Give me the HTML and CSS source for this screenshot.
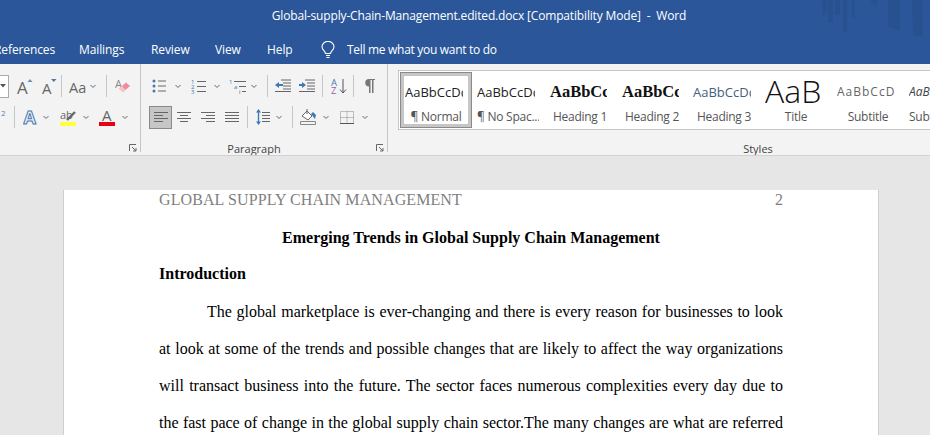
FILE: index.html
```html
<!DOCTYPE html>
<html lang="en">
<head>
<meta charset="utf-8">
<title>Global-supply-Chain-Management.edited.docx</title>
<link rel="stylesheet" href="styles.css">
</head>
<body>
<header class="titlebar">
  <div class="title">Global-supply-Chain-Management.edited.docx [Compatibility Mode]  -  Word</div>
  <svg class="decor" width="110" height="40" viewBox="0 0 110 40">
    <g fill="#28518f">
      <rect x="2" y="0" width="5" height="15"/><rect x="8" y="0" width="5" height="23"/><rect x="15" y="0" width="5" height="15"/><rect x="23" y="0" width="4" height="32"/><rect x="32" y="0" width="3" height="18"/>
      <path d="M50 0h7v8z"/>
      <path d="M68 0h12v31l-4-2-8-2z"/>
      <path d="M92 0h11v36h-10z"/>
    </g>
  </svg>
  <nav class="tabs">
    <span class="tab tab-refs">References</span>
    <span class="tab tab-mail">Mailings</span>
    <span class="tab tab-rev">Review</span>
    <span class="tab tab-view">View</span>
    <span class="tab tab-help">Help</span>
    <svg class="bulb" width="14" height="18" viewBox="0 0 14 18" fill="none" stroke="#fff" stroke-width="1.1">
      <path d="M4.5 12.5C4.3 10 1 9 1 5.8a6 5.4 0 0 1 12 0C13 9 9.700 10 9.500 12.500z"/>
      <path d="M5 14.500h4M5.500 16.500h3"/>
    </svg>
    <span class="tab tab-tell">Tell me what you want to do</span>
  </nav>
</header>

<section class="ribbon">
  <div class="group group-font">
    <div class="tools row-a font-a">
      <span class="combo"><svg width="6" height="4" viewBox="0 0 6 4"><path d="M0 0h6L3 3.500z" fill="#555"/></svg></span>
      <svg class="ico" width="16" height="17" viewBox="0 0 16 17"><text x="0" y="16" class="glyph big">A</text><path d="M10.500 4l2.500-3 2.500 3z" fill="#6b8db5"/></svg>
      <svg class="ico" width="15" height="17" viewBox="0 0 15 17"><text x="0" y="16" class="glyph mid">A</text><path d="M9 1h5.500l-2.700 3z" fill="#4a78ae"/></svg>
      <i class="sep"></i>
      <svg class="ico" width="18" height="15" viewBox="0 0 18 15"><text x="0" y="13.500" class="glyph aa">Aa</text></svg>
      <svg class="chev" width="8" height="5" viewBox="0 0 8 5"><path d="M1.500 1L4 3.500 6.500 1"/></svg>
      <i class="sep"></i>
      <svg class="ico" width="16" height="16" viewBox="0 0 16 16"><text x="0" y="10" class="glyph tiny">A</text><path d="M4 10.500l7-6 4 3.500-7 6z" fill="#ee8c9c"/><path d="M4 10.500l3-2.500 3.500 4-2.500 2z" fill="#f7c4cc"/></svg>
    </div>
    <div class="tools row-b font-b">
      <span class="sup">2</span>
      <i class="sep"></i>
      <svg class="ico" width="15" height="16" viewBox="0 0 15 16"><text x="0.500" y="14.500" class="glyph effect">A</text></svg>
      <svg class="chev" width="8" height="5" viewBox="0 0 8 5"><path d="M1.500 1L4 3.500 6.500 1"/></svg>
      <svg class="ico" width="17" height="17" viewBox="0 0 17 17"><text x="0" y="10" class="glyph small">ab</text><path d="M7 11l8-8" stroke="#666" stroke-width="2.400"/><rect x="0" y="13" width="16" height="4" fill="#ffff3c"/></svg>
      <svg class="chev" width="8" height="5" viewBox="0 0 8 5"><path d="M1.500 1L4 3.500 6.500 1"/></svg>
      <svg class="ico" width="16" height="17" viewBox="0 0 16 17"><text x="3" y="12" class="glyph mid">A</text><rect x="0" y="13" width="16" height="4" fill="#e8000f"/></svg>
      <svg class="chev" width="8" height="5" viewBox="0 0 8 5"><path d="M1.500 1L4 3.500 6.500 1"/></svg>
    </div>
    <footer class="group-foot">
      <span></span><span></span>
      <svg class="launch" width="8" height="8" viewBox="0 0 8 8"><path d="M.5 7V.5H7M3 3l4 4M7 4v3H4" fill="none" stroke="#666"/></svg>
    </footer>
  </div>

  <div class="group group-para">
    <div class="tools row-a para-a">
      <svg class="ico" width="14" height="14" viewBox="0 0 14 14"><g fill="#4a78ae"><circle cx="2" cy="2" r="1.500"/><circle cx="2" cy="7" r="1.500"/><circle cx="2" cy="12" r="1.500"/></g><path d="M6 2h8M6 7h8M6 12h8" stroke="#666"/></svg>
      <svg class="chev" width="8" height="5" viewBox="0 0 8 5"><path d="M1.500 1L4 3.500 6.500 1"/></svg>
      <svg class="ico" width="15" height="15" viewBox="0 0 15 15"><text x="0" y="5" class="glyph num">1</text><text x="0" y="10" class="glyph num">2</text><text x="0" y="15" class="glyph num">3</text><path d="M6 2.500h9M6 7.500h9M6 12.500h9" stroke="#666"/></svg>
      <svg class="chev" width="8" height="5" viewBox="0 0 8 5"><path d="M1.500 1L4 3.500 6.500 1"/></svg>
      <svg class="ico" width="17" height="15" viewBox="0 0 17 15"><text x="0" y="5" class="glyph num">1</text><text x="5" y="10" class="glyph num">a</text><text x="10" y="15" class="glyph num-d">i</text><path d="M5 2.500h12M10 7.500h7M13 12.500h4" stroke="#666"/></svg>
      <svg class="chev" width="8" height="5" viewBox="0 0 8 5"><path d="M1.500 1L4 3.500 6.500 1"/></svg>
      <i class="sep"></i>
      <svg class="ico" width="16" height="14" viewBox="0 0 16 14"><path d="M6 1.500h10M8 4.500h8M8 7.500h8M8 10.500h8M0 13h16" stroke="#666" transform="translate(0 -.5)"/><path d="M0 6l4-3v2h4v2H4v2z" fill="#3f79b5"/></svg>
      <svg class="ico" width="16" height="14" viewBox="0 0 16 14"><path d="M6 1.500h10M8 4.500h8M8 7.500h8M8 10.500h8M0 13h16" stroke="#666" transform="translate(0 -.5)"/><path d="M7 6L3 3v2H0v2h3v2z" fill="#3f79b5"/></svg>
      <i class="sep"></i>
      <svg class="ico" width="16" height="16" viewBox="0 0 16 16"><text x="0" y="7.500" class="glyph az-a">A</text><text x="0" y="16" class="glyph az-z">Z</text><path d="M12 1v14M9 11.500l3 3.500 3-3.500" fill="none" stroke="#555"/></svg>
      <i class="sep"></i>
      <svg class="ico" width="11" height="14" viewBox="0 0 11 14"><path d="M5 7.500a3.700 3.700 0 0 1 0-7.500h6v1H9.500v13H8V1H6.500v13H5z" fill="#777"/></svg>
    </div>
    <div class="tools row-b para-b">
      <span class="toggle"><svg width="14" height="11" viewBox="0 0 14 11"><path d="M0 .5h14M0 3.500h9M0 6.500h14M0 9.500h9" stroke="#666"/></svg></span>
      <svg class="ico" width="14" height="11" viewBox="0 0 14 11"><path d="M0 .5h14M3 3.500h8M0 6.500h14M3 9.500h8" stroke="#666"/></svg>
      <svg class="ico" width="14" height="11" viewBox="0 0 14 11"><path d="M0 .5h14M5 3.500h9M0 6.500h14M5 9.500h9" stroke="#666"/></svg>
      <svg class="ico" width="14" height="11" viewBox="0 0 14 11"><path d="M0 .5h14M0 3.500h14M0 6.500h14M0 9.500h14" stroke="#666"/></svg>
      <i class="sep"></i>
      <svg class="ico" width="14" height="16" viewBox="0 0 14 16"><path d="M6 3.500h8M6 6.500h8M6 9.500h8M6 12.500h8" stroke="#666"/><path d="M2.500 0L5 3.500H3.200v9H5L2.500 16 0 12.500h1.800v-9H0z" fill="#3f79b5"/></svg>
      <svg class="chev" width="8" height="5" viewBox="0 0 8 5"><path d="M1.500 1L4 3.500 6.500 1"/></svg>
      <i class="sep"></i>
      <svg class="ico" width="16" height="16" viewBox="0 0 16 16"><path d="M.5 12.500h15v3H.5z" fill="#f3f3f3" stroke="#888"/><path d="M2 7l5-5 5 5-4 4z" fill="#fff" stroke="#666"/><path d="M7 0v5" stroke="#666"/><path d="M11 5l2-2 3 3-1 4z" fill="#3f79b5"/></svg>
      <svg class="chev" width="8" height="5" viewBox="0 0 8 5"><path d="M1.500 1L4 3.500 6.500 1"/></svg>
      <svg class="ico" width="14" height="13" viewBox="0 0 14 13"><path d="M.5.500h13v12H.5zM7 .5v12M.5 6.500h13" fill="none" stroke="#888" stroke-dasharray="1 1"/><path d="M0 12.500h14" stroke="#555"/></svg>
      <svg class="chev" width="8" height="5" viewBox="0 0 8 5"><path d="M1.500 1L4 3.500 6.500 1"/></svg>
    </div>
    <footer class="group-foot">
      <span></span><span class="group-name name-para">Paragraph</span>
      <svg class="launch" width="8" height="8" viewBox="0 0 8 8"><path d="M.5 7V.5H7M3 3l4 4M7 4v3H4" fill="none" stroke="#666"/></svg>
    </footer>
  </div>

  <div class="group group-styles">
    <div class="gallery">
      <div class="style selected"><div class="pv pv-plain">AaBbCcDd</div><div class="lbl">¶ Normal</div></div>
      <div class="style"><div class="pv pv-plain">AaBbCcDd</div><div class="lbl">¶ No Spac...</div></div>
      <div class="style"><div class="pv pv-head">AaBbCcDd</div><div class="lbl">Heading 1</div></div>
      <div class="style"><div class="pv pv-head">AaBbCcDd</div><div class="lbl">Heading 2</div></div>
      <div class="style"><div class="pv pv-h3">AaBbCcDd</div><div class="lbl">Heading 3</div></div>
      <div class="style"><div class="pv pv-title">AaBbCcDd</div><div class="lbl">Title</div></div>
      <div class="style"><div class="pv pv-sub">AaBbCcDd</div><div class="lbl">Subtitle</div></div>
      <div class="style"><div class="pv pv-em">AaBbCcDd</div><div class="lbl">Subtle Em...</div></div>
    </div>
    <footer class="styles-foot"><span class="group-name">Styles</span></footer>
  </div>
</section>

<main class="doc">
  <article class="page">
    <div class="page-head"><span class="head-text">GLOBAL SUPPLY CHAIN MANAGEMENT</span><span>2</span></div>
    <h1 class="doc-title">Emerging Trends in Global Supply Chain Management</h1>
    <h2 class="doc-h2">Introduction</h2>
    <p class="line first">The global marketplace is ever-changing and there is every reason for businesses to look</p>
    <p class="line">at look at some of the trends and possible changes that are likely to affect the way organizations</p>
    <p class="line">will transact business into the future. The sector faces numerous complexities every day due to</p>
    <p class="line">the fast pace of change in the global supply chain sector.The many changes are what are referred</p>
  </article>
</main>
</body>
</html>
```
FILE: styles.css
```css
* { box-sizing: border-box; }
html, body { margin: 0; padding: 0; height: 435px; overflow: hidden; }
body { width: 930px; background: #e6e6e6; font-family: "Open Sans", "Noto Sans", sans-serif; }

.titlebar { position: relative; height: 64px; background: #2b579a; color: #fff; overflow: hidden; }
.title { height: 36px; padding: 7px 0 0 28px; text-align: center; font-size: 12px; line-height: 17px; white-space: pre; letter-spacing: -0.16px; }
.decor { position: absolute; right: 0; top: 0; }
.tabs { display: flex; align-items: center; height: 28px; margin-left: -6px; font-size: 12px; line-height: 16px; white-space: nowrap; letter-spacing: -0.1px; }
.tab-refs { width: 85px; }
.tab-mail { width: 72px; }
.tab-rev { width: 64px; }
.tab-view { width: 52px; }
.tab-help { width: 54px; }
.tab-tell { letter-spacing: -0.3px; }
.bulb { margin-right: 12px; }

.ribbon { display: flex; height: 92px; background: #f3f3f3; border-bottom: 1px solid #d2d2d2; overflow: hidden; }
.group { display: flex; flex-direction: column; padding-top: 8px; }
.group-font { width: 141px; border-right: 1px solid #c6c6c6; margin-bottom: 3px; }
.group-para { width: 247px; border-right: 1px solid #c6c6c6; margin-bottom: 3px; }
.group-styles { flex: 1; min-width: 0; padding: 6px 0 0 10px; }

.tools { display: grid; align-items: center; }
.row-a { height: 28px; }
.row-b { height: 28px; margin-top: 3px; }
.font-a { grid-template-columns: 17px 25px 19px 8px 20px 17px 9px auto; }
.font-b { grid-template-columns: 14px 9px 19px 18px 22px 17px 22px auto; }
.para-a { padding-left: 11px; grid-template-columns: 22px 17px 22px 16px 21px 17px 8px 24px 23px 9px 22px 11px auto; }
.para-b { padding-left: 8px; grid-template-columns: 28px 24px 24px 22px 9px 19px 17px 8px 22px 18px 21px auto; }

.ico, .chev { display: block; }
.chev path { fill: none; stroke: #666; stroke-width: 1; }
.sep { display: block; width: 1px; height: 22px; background: #c6c6c6; }
.combo { display: flex; align-items: center; justify-content: flex-start; width: 9px; height: 23px; background: #fff; border: 1px solid #ababab; border-left: 0; }
.sup { font-size: 8px; color: #5b87b5; line-height: 10px; align-self: start; padding-top: 5px; padding-left: 1px; }
.toggle { display: flex; align-items: center; justify-content: center; width: 23px; height: 23px; background: #c6c6c6; border: 1px solid #8a8a8a; }

.glyph { font-family: "Open Sans", sans-serif; fill: #666; }
.big { font-size: 17px; }
.aa { font-size: 14.500px; }
.mid { font-size: 15px; }
.small { font-size: 11px; }
.tiny { font-size: 11px; fill: #888; }
.effect { font-size: 18px; font-weight: 700; fill: #eaf2fa; stroke: #4a78ae; stroke-width: 1; }
.num { font-size: 6px; fill: #3f79b5; }
.num-d { font-size: 6px; fill: #555; }
.az-a { font-size: 9.500px; fill: #3f79b5; }
.az-z { font-size: 9.500px; fill: #a05ca8; }

.group-foot { display: grid; grid-template-columns: 1fr auto 1fr; align-items: end; margin-top: auto; height: 17px; padding-right: 3px; }
.group-foot .launch { justify-self: end; }
.group-name { font-size: 11px; line-height: 15px; color: #444; display: block; margin-bottom: -4px; }
.name-para { margin-right: 17px; }
.styles-foot { margin: 11px 0 0 -10px; width: 740px; text-align: center; line-height: 15px; }

.gallery { display: flex; height: 60px; background: #fff; border: 1px solid #c6c6c6; border-right: 0; padding: 1px 0 0 1px; overflow: hidden; }
.style { flex: 0 0 72px; width: 72px; height: 56px; padding: 0 1px; text-align: center; border: 4px solid transparent; }
.selected { border: 1px solid #8a8a8a; outline: 3px solid #c6c6c6; outline-offset: -4px; padding: 3px 4px; }
.pv { width: 58px; height: 24px; margin-top: 4px; overflow: hidden; white-space: nowrap; font-size: 13px; line-height: 24px; color: #222; text-align: left; }
.pv-head { font-family: "Liberation Serif", serif; font-weight: 700; font-size: 16.500px; color: #111; padding-left: 1px; }
.pv-h3 { color: #44607f; }
.pv-title { font-size: 32px; font-weight: 300; line-height: 21px; color: #111; }
.pv-sub { color: #666; letter-spacing: 1px; font-size: 12px; }
.pv-em { font-style: italic; color: #444; font-size: 12px; }
.lbl { font-size: 12px; line-height: 16px; margin-top: 5px; color: #555; white-space: nowrap; overflow: hidden; text-align: center; letter-spacing: -0.25px; }

.doc { padding: 34px 51px 0 63px; }
.page { background: #fff; height: 260px; padding: 0 95px; border-left: 1px solid #cfcfcf; border-right: 1px solid #cfcfcf; font-family: "Liberation Serif", serif; font-size: 16px; color: #000; }
.page-head { display: flex; justify-content: space-between; color: #7f7f7f; line-height: 19px; }
.head-text { letter-spacing: 0.1px; }
.doc-title { margin: 19px 0 0; font-size: 16px; line-height: 19px; text-align: center; }
.doc-h2 { margin: 17px 0 0; font-size: 16px; line-height: 19px; }
.line { margin: 0; height: 37px; line-height: 37px; text-align: justify; text-align-last: justify; white-space: nowrap; overflow: hidden; }
.first { margin-top: 10px; text-indent: 48px; }
```
